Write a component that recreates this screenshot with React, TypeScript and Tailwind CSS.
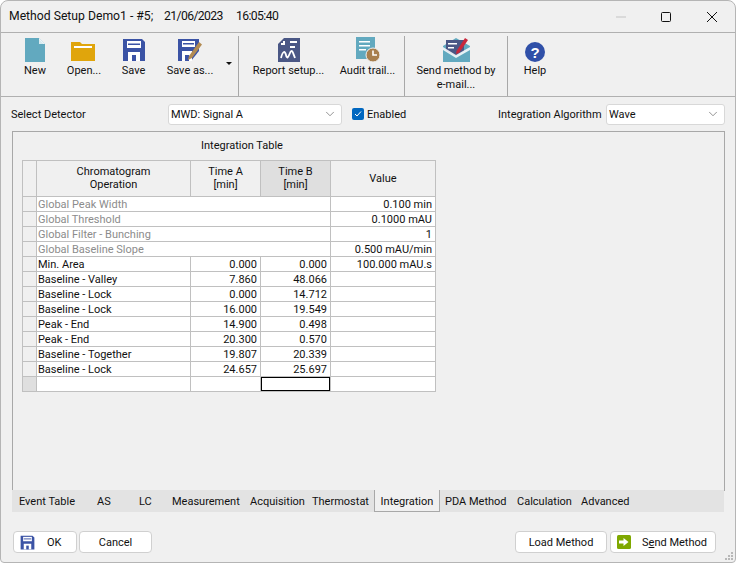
import { ChevronDown } from "lucide-react";
import type { ReactNode } from "react";

const FONT = "font-['Roboto','Noto_Sans',sans-serif]";

function SaveIcon({ size = 24, color = "#3b53a5" }: { size?: number; color?: string }) {
  return (
    <svg width={size} height={size} viewBox="0 0 24 24">
      <path d="M1 1h19l3 3v19H1z" fill={color} />
      <rect x="5" y="3" width="14" height="7" fill="#fff" />
      <rect x="6" y="5.5" width="12" height="1.5" fill={color} />
      <rect x="6" y="14" width="12" height="9" fill="#fff" />
      <rect x="10" y="17" width="4" height="6" fill={color} />
    </svg>
  );
}

const icons: Record<string, ReactNode> = {
  new: (
    <svg width="24" height="24" viewBox="0 0 24 24" className="-ml-[1px]">
      <path d="M2 0h14l6 6v18H2z" fill="#62a9bf" />
      <path d="M16 0v6h6z" fill="#fff" />
      <path d="M16 1v5h5" fill="#d9ebf0" />
    </svg>
  ),
  open: (
    <svg width="26" height="24" viewBox="0 0 26 24" className="-ml-[2px]">
      <path d="M1 4h9l2 2h13v17H1z" fill="#e0a50c" />
      <rect x="4" y="8" width="18" height="2" fill="#fff" />
    </svg>
  ),
  save: <SaveIcon />,
  saveAs: (
    <svg width="26" height="24" viewBox="0 0 26 24">
      <path d="M1 1h21v12l-8 10H1z" fill="#3b53a5" />
      <rect x="5" y="3" width="13" height="6" fill="#fff" />
      <rect x="6" y="5" width="11" height="1.5" fill="#3b53a5" />
      <path d="M5 13h10v10H5z" fill="#fff" />
      <rect x="8" y="17" width="4" height="6" fill="#3b53a5" />
      <path d="M22 4l3 2.5L15 20l-4 2 1-4z" fill="#b38b52" />
    </svg>
  ),
  report: (
    <svg width="22" height="24" viewBox="0 0 22 24">
      <path d="M6 0h16v24H0V6z" fill="#4a5785" />
      <rect x="3" y="5" width="4" height="2" fill="#fff" />
      <rect x="5" y="3" width="2" height="4" fill="#fff" />
      <rect x="12" y="3" width="7" height="2" fill="#fff" />
      <rect x="12" y="8" width="5" height="2" fill="#fff" />
      <path d="M3 20c2-8 4-7 5-3s2 3 4-2 3 0 5 5" fill="none" stroke="#fff" strokeWidth="1.8" />
    </svg>
  ),
  audit: (
    <svg width="24" height="25" viewBox="0 0 24 25">
      <path d="M0 0h19v18H0z" fill="#62a9bf" />
      <path d="M0 18h12v4H0z" fill="#62a9bf" />
      <rect x="3" y="4" width="11" height="1.5" fill="#fff" />
      <rect x="3" y="8" width="11" height="1.5" fill="#fff" />
      <rect x="3" y="12" width="7" height="1.5" fill="#fff" />
      <circle cx="17" cy="18" r="7" fill="#a87f4e" stroke="#f0f0f0" strokeWidth="1" />
      <path d="M17 13.5V18h4" fill="none" stroke="#fff" strokeWidth="1.6" />
    </svg>
  ),
  send: (
    <svg width="27" height="25" viewBox="0 0 27 25">
      <path d="M0 9l13-8 14 8v16H0z" fill="#62a9bf" />
      <path d="M3 3h18v11l-8 5-10-5z" fill="#4a5785" />
      <rect x="5" y="6" width="9" height="1.5" fill="#fff" />
      <rect x="5" y="10" width="6" height="1.5" fill="#fff" />
      <path d="M22 1l3 2-9 13-3 1 .5-3z" fill="#c8283c" />
      <path d="M0 10l13 8 14-8v3l-14 8-13-8z" fill="#fff" opacity=".85" />
    </svg>
  ),
  help: (
    <svg width="20" height="20" viewBox="0 0 20 20">
      <circle cx="10" cy="10" r="10" fill="#3050a8" />
      <text x="10" y="15.5" textAnchor="middle" fontSize="15" fontWeight="700" fill="#fff" fontFamily="Liberation Sans">?</text>
    </svg>
  ),
};

function ToolButton({ icon, label, width }: { icon: string; label: ReactNode; width: string }) {
  return (
    <div className={`flex flex-col items-center ${width}`}>
      <div className="h-[27px] flex items-end">{icons[icon]}</div>
      <div className="mt-[2px] text-center leading-[14px] whitespace-nowrap">{label}</div>
    </div>
  );
}

function Separator() {
  return <div className="w-[1px] h-[60px] bg-[#a8a8a8] mt-[1px]" />;
}

function Combo({ value, width }: { value: string; width: string }) {
  return (
    <div className={`${width} h-[21px] bg-white border border-[#d8d8d8] rounded-[3px] flex items-center justify-between pl-[2px] pr-[4px]`}>
      <span className="pt-[2px]">{value}</span>
      <ChevronDown size={14} strokeWidth={1.2} className="text-[#666]" />
    </div>
  );
}

const globals = [
  ["Global Peak Width", "0.100 min"],
  ["Global Threshold", "0.1000 mAU"],
  ["Global Filter - Bunching", "1"],
  ["Global Baseline Slope", "0.500 mAU/min"],
];

const rows = [
  ["Min. Area", "0.000", "0.000", "100.000 mAU.s"],
  ["Baseline - Valley", "7.860", "48.066", ""],
  ["Baseline - Lock", "0.000", "14.712", ""],
  ["Baseline - Lock", "16.000", "19.549", ""],
  ["Peak - End", "14.900", "0.498", ""],
  ["Peak - End", "20.300", "0.570", ""],
  ["Baseline - Together", "19.807", "20.339", ""],
  ["Baseline - Lock", "24.657", "25.697", ""],
];

const tabs = [
  ["Event Table", "w-[85px] pl-[7px]"],
  ["AS", "w-[42px]"],
  ["LC", "w-[33px]"],
  ["Measurement", "w-[78px]"],
  ["Acquisition", "w-[62px]"],
  ["Thermostat", "w-[62px]"],
];
const tabsRight = [
  ["PDA Method", "w-[72px] pl-[5px]"],
  ["Calculation", "w-[64px] pl-[5px]"],
  ["Advanced", "w-[60px] pl-[5px]"],
];

const head = "border border-[#c0c0c0] p-0 font-normal leading-[13px]";
const cell = "border border-[#c0c0c0] p-0 pt-[2px] h-[15px] leading-[12px]";

export default function App() {
  return (
    <div className={`${FONT} w-[736px] h-[563px] bg-white text-[11px] text-[#111] overflow-hidden`}>
      <div className="relative w-[736px] h-[563px] bg-[#f0f0f0] border border-[#b5b5b5] rounded-t-[8px] rounded-b-[4px] flex flex-col">
        {/* title bar */}
        <div className="h-[31px] shrink-0 flex items-center pl-[8px] text-[12.2px]">
          <span className="w-[155px] whitespace-nowrap">Method Setup Demo1 - #5;</span>
          <span className="w-[72px] tracking-[-0.6px] whitespace-nowrap">21/06/2023</span>
          <span className="tracking-[-0.6px]">16:05:40</span>
          <div className="ml-auto flex items-center text-[#111]">
            <svg width="12" height="12" viewBox="0 0 12 12" className="mr-[33px]">
              <path d="M1 6h10" stroke="#c4c4c4" strokeWidth="1" />
            </svg>
            <svg width="12" height="12" viewBox="0 0 12 12" className="mr-[34px]">
              <rect x="1.5" y="1.5" width="9" height="9" rx="1" fill="none" stroke="#111" strokeWidth="1" />
            </svg>
            <svg width="12" height="12" viewBox="0 0 12 12" className="mr-[17px]">
              <path d="M1 1l10 10M11 1L1 11" stroke="#111" strokeWidth="1" />
            </svg>
          </div>
        </div>

        {/* toolbar */}
        <div className="h-[65px] shrink-0 border-y border-[#b0b0b0] flex pl-[10px] pt-[2px]">
          <ToolButton icon="new" label="New" width="w-[48px]" />
          <ToolButton icon="open" label="Open..." width="w-[50px]" />
          <ToolButton icon="save" label="Save" width="w-[49px]" />
          <ToolButton icon="saveAs" label="Save as..." width="w-[64px]" />
          <div className="w-[16px] pt-[27px] pl-[4px]">
            <div className="w-0 h-0 border-x-[3px] border-x-transparent border-t-[3px] border-t-[#111]" />
          </div>
          <Separator />
          <ToolButton icon="report" label="Report setup..." width="w-[99px]" />
          <ToolButton icon="audit" label="Audit trail..." width="w-[59px]" />
          <div className="w-[7px]" />
          <Separator />
          <ToolButton icon="send" label={<>Send method by<br />e-mail...</>} width="w-[102px]" />
          <Separator />
          <ToolButton icon="help" label="Help" width="w-[54px]" />
        </div>

        {/* detector row */}
        <div className="h-[34px] shrink-0 flex items-center pl-[10px]">
          <span className="w-[157px] pt-[2px]">Select Detector</span>
          <Combo value="MWD: Signal A" width="w-[174px]" />
          <div className="ml-[10px] w-[12px] h-[12px] bg-[#0067c0] rounded-[2px] flex items-center justify-center">
            <svg width="10" height="10" viewBox="0 0 10 10">
              <path d="M2 5l2 2 4-4.5" fill="none" stroke="#fff" strokeWidth="1" />
            </svg>
          </div>
          <span className="ml-[3px] w-[131px] pt-[2px]">Enabled</span>
          <span className="w-[108px] pt-[2px] whitespace-nowrap">Integration Algorithm</span>
          <Combo value="Wave" width="w-[119px]" />
        </div>

        {/* main panel */}
        <div className="ml-[11px] w-[713px] h-[360px] shrink-0 border border-[#a8a8a8] pl-[9px]">
          <div className="h-[28px] pl-[179px] pt-[6px] leading-[16px]">Integration Table</div>
          <table className="table-fixed border-collapse w-[414px] bg-white">
            <colgroup>
              <col className="w-[14px]" />
              <col className="w-[154px]" />
              <col className="w-[70px]" />
              <col className="w-[70px]" />
              <col className="w-[105px]" />
            </colgroup>
            <thead>
              <tr className="h-[36px] bg-[#f0f0f0]">
                <th className={head} />
                <th className={`${head} pb-[2px]`}>Chromatogram<br />Operation</th>
                <th className={`${head} pb-[2px]`}>Time A<br />[min]</th>
                <th className={`${head} pb-[2px] bg-[#dfdfdf]`}>Time B<br />[min]</th>
                <th className={head}>Value</th>
              </tr>
            </thead>
            <tbody>
              {globals.map(([name, value]) => (
                <tr key={name}>
                  <td className={`${cell} bg-[#f0f0f0]`} />
                  <td colSpan={3} className={`${cell} pl-[1px] text-[#8c8c8c] whitespace-nowrap`}>{name}</td>
                  <td className={`${cell} pr-[3px] text-right whitespace-nowrap`}>{value}</td>
                </tr>
              ))}
              {rows.map(([name, a, b, value], i) => (
                <tr key={i}>
                  <td className={`${cell} bg-[#f0f0f0]`} />
                  <td className={`${cell} pl-[1px] whitespace-nowrap`}>{name}</td>
                  <td className={`${cell} pr-[3px] text-right`}>{a}</td>
                  <td className={`${cell} pr-[3px] text-right`}>{b}</td>
                  <td className={`${cell} pr-[3px] text-right whitespace-nowrap`}>{value}</td>
                </tr>
              ))}
              <tr>
                <td className={`${cell} bg-[#dfdfdf]`} />
                <td className={cell} />
                <td className={cell} />
                <td className={`${cell} shadow-[inset_0_0_0_1px_#000]`} />
                <td className={cell} />
              </tr>
            </tbody>
          </table>
        </div>

        {/* tabs */}
        <div className="ml-[11px] w-[712px] h-[22px] shrink-0 bg-[#e3e3e3] flex items-center -mt-[1px] leading-[20px]">
          {tabs.map(([t, c]) => (
            <div key={t} className={`${c} pt-[2px] whitespace-nowrap`}>{t}</div>
          ))}
          <div className="w-[66px] h-[22px] bg-[#f0f0f0] border-x border-b border-[#a8a8a8] flex items-center justify-center pt-[3px] whitespace-nowrap">Integration</div>
          {tabsRight.map(([t, c]) => (
            <div key={t} className={`${c} pt-[2px] whitespace-nowrap`}>{t}</div>
          ))}
        </div>

        {/* bottom buttons */}
        <div className="flex pl-[12px] pt-[19px]">
          <button className="w-[64px] h-[22px] bg-white border border-[#d0d0d0] rounded-[4px] flex items-center pl-[6px]">
            <SaveIcon size={15} />
            <span className="ml-[12px] pt-[2px]">OK</span>
          </button>
          <button className="ml-[2px] w-[73px] h-[22px] pt-[2px] bg-white border border-[#d0d0d0] rounded-[4px]">Cancel</button>
          <button className="ml-[363px] w-[92px] h-[22px] pt-[2px] bg-white border border-[#d0d0d0] rounded-[4px]">Load Method</button>
          <button className="ml-[3px] w-[106px] h-[22px] bg-white border border-[#d0d0d0] rounded-[4px] flex items-center pl-[6px]">
            <svg width="14" height="14" viewBox="0 0 14 14">
              <rect width="14" height="14" rx="1.5" fill="#7fa800" />
              <path d="M2 5.5h4.5V3L11.5 7l-5 4V8.5H2z" fill="#fff" />
            </svg>
            <span className="ml-[11px] pt-[2px]">S<u>e</u>nd Method</span>
          </button>
        </div>

        {/* resize grip */}
        <svg width="10" height="10" viewBox="0 0 10 10" className="absolute right-[1px] bottom-[1px]">
          <g fill="#b8b8b8">
            <rect x="7" y="1" width="2" height="2" />
            <rect x="4" y="4" width="2" height="2" />
            <rect x="7" y="4" width="2" height="2" />
            <rect x="1" y="7" width="2" height="2" />
            <rect x="4" y="7" width="2" height="2" />
            <rect x="7" y="7" width="2" height="2" />
          </g>
        </svg>
      </div>
    </div>
  );
}
